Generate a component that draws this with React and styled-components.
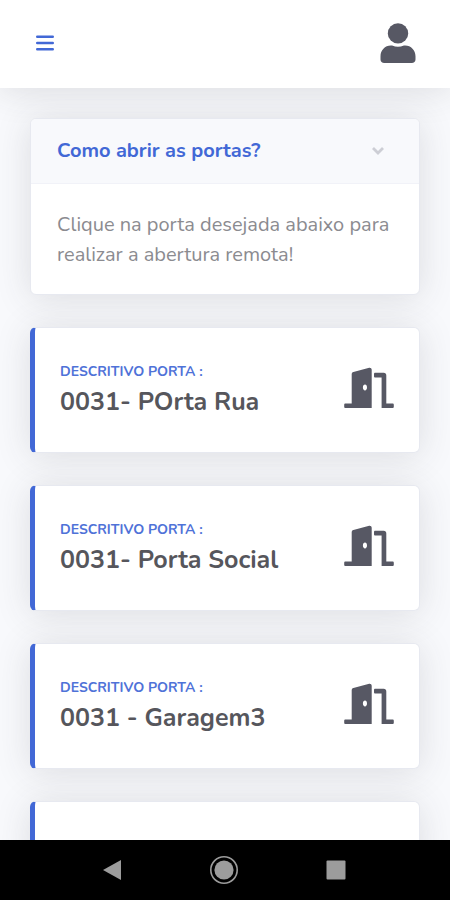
import React from "react";
import styled, { createGlobalStyle } from "styled-components";

const GlobalStyle = createGlobalStyle`
  * { box-sizing: border-box; }
  body {
    margin: 0;
    background: #f8f9fc;
    font-family: Nunito, Lato, sans-serif;
    color: #858796;
  }
  button { font: inherit; color: inherit; border: 0; background: none; padding: 0; cursor: pointer; }
  svg { display: block; }
`;

const shadow = "0 3px 35px rgba(58, 59, 69, 0.15)";

const Screen = styled.div`
  height: 100vh;
  display: flex;
  flex-direction: column;
`;

const TopBar = styled.header`
  flex: none;
  height: 88px;
  padding: 0 34px 2px 36px;
  display: flex;
  align-items: center;
  justify-content: space-between;
  background: #fff;
  box-shadow: ${shadow};
`;

const MenuButton = styled.button`
  color: #4268d6;
`;

const UserButton = styled.button`
  color: #575864;
`;

const Content = styled.main`
  flex: 1;
  min-height: 0;
  overflow-y: auto;
  scrollbar-width: none;
  padding: 30px;
  display: flex;
  flex-direction: column;
  gap: 32px;
`;

const Card = styled.section`
  flex: none;
  background: #fff;
  border: 1px solid #e7e9f0;
  border-radius: 6px;
  box-shadow: ${shadow};
`;

const CardHeader = styled.button`
  width: 100%;
  height: 65px;
  padding: 0 34px 0 26px;
  display: flex;
  align-items: center;
  justify-content: space-between;
  background: #f8f9fc;
  border-bottom: 1px solid #f1f2f8;
  border-radius: 5px 5px 0 0;
  color: #4268d6;
`;

const CardTitle = styled.span`
  font-size: 20px;
  line-height: 24px;
  font-weight: 700;
`;

const CardText = styled.p`
  margin: 0;
  padding: 26px 26px 24px;
  font-size: 20px;
  line-height: 30px;
  color: #8b8b90;
`;

const DoorCard = styled.button`
  flex: none;
  height: 126px;
  padding: 33px 25px 0;
  display: flex;
  align-items: flex-start;
  justify-content: space-between;
  text-align: left;
  background: #fff;
  border: 1px solid #e7e9f0;
  border-left: 5px solid #4268d6;
  border-radius: 6px;
  box-shadow: ${shadow};
`;

const DoorInfo = styled.span`
  display: flex;
  flex-direction: column;
  gap: 2px;
`;

const DoorLabel = styled.span`
  font-size: 14px;
  line-height: 21px;
  font-weight: 700;
  text-transform: uppercase;
  color: #4f72d8;
`;

const DoorName = styled.span`
  font-size: 25px;
  line-height: 36px;
  font-weight: 700;
  color: #56565c;
`;

const DoorDrawing = styled.svg`
  margin-top: 6px;
  color: #575864;
`;

const SystemBar = styled.nav`
  flex: none;
  height: 60px;
  padding: 0 104px 0 102px;
  display: flex;
  align-items: center;
  justify-content: space-between;
  background: #000;
  color: #9c9c9c;
`;

const MenuIcon = () => (
  <svg width="18" height="18" viewBox="0 0 18 18" aria-hidden="true">
    <path d="M1.2 2.8h15.6M1.2 9h15.6M1.2 15.2h15.6" stroke="currentColor" strokeWidth="2.4" strokeLinecap="round" />
  </svg>
);

const UserIcon = () => (
  <svg width="36" height="42" viewBox="0 0 36 42" fill="currentColor" aria-hidden="true">
    <circle cx="18" cy="11.4" r="10.2" />
    <path d="M10.8 23.5h1.3a14 14 0 0 0 11.8 0h1.3c5.8 0 10.3 4.8 10.3 10.7v3.3c0 2.1-1.6 3.6-3.7 3.6H4.2C2.1 41.1.5 39.6.5 37.5v-3.3c0-5.9 4.5-10.7 10.3-10.7z" />
  </svg>
);

const ChevronIcon = () => (
  <svg width="14" height="10" viewBox="0 0 14 10" aria-hidden="true">
    <path d="M2 2l5 5 5-5" fill="none" stroke="#cdced5" strokeWidth="2.8" />
  </svg>
);

const DoorIcon = () => (
  <DoorDrawing width="50" height="42" viewBox="0 0 50 42" fill="currentColor" aria-hidden="true">
    <path fillRule="evenodd" d="M25.2.8 9.4 4.9C8.3 5.2 7.7 6 7.7 7v29.4H1.5c-.8 0-1.3.5-1.3 1.3v2c0 .8.5 1.3 1.3 1.3h26.2V2.7c0-1.3-1.2-2.2-2.5-1.9zM21 17.6c1.2 0 2 1.2 2 2.9s-.8 2.9-2 2.9-2.1-1.2-2.1-2.9.9-2.9 2.1-2.9z" />
    <path d="M31.3 5.8h8.4c1.6 0 2.6 1.1 2.6 2.6v28h6.2c.8 0 1.3.5 1.3 1.3v2c0 .8-.5 1.3-1.3 1.3H37.6V10.6h-6.3c-.8 0-1.3-.5-1.3-1.3V7.1c0-.8.5-1.3 1.3-1.3z" />
  </DoorDrawing>
);

const doors = ["0031- POrta Rua", "0031- Porta Social", "0031 - Garagem3", null];

export default function App() {
  return (
    <Screen>
      <GlobalStyle />
      <TopBar>
        <MenuButton aria-label="Menu"><MenuIcon /></MenuButton>
        <UserButton aria-label="Perfil"><UserIcon /></UserButton>
      </TopBar>
      <Content>
        <Card>
          <CardHeader aria-expanded="true" aria-controls="ajuda">
            <CardTitle>Como abrir as portas?</CardTitle>
            <ChevronIcon />
          </CardHeader>
          <CardText id="ajuda">Clique na porta desejada abaixo para realizar a abertura remota!</CardText>
        </Card>
        {doors.map((name, i) => (
          <DoorCard key={i} aria-label={name || "Porta"}>
            {name && (
              <>
                <DoorInfo>
                  <DoorLabel>Descritivo porta :</DoorLabel>
                  <DoorName>{name}</DoorName>
                </DoorInfo>
                <DoorIcon />
              </>
            )}
          </DoorCard>
        ))}
      </Content>
      <SystemBar>
        <button aria-label="Voltar">
          <svg width="20" height="22" viewBox="0 0 20 22"><path d="M1 11 19 1v20z" fill="currentColor" /></svg>
        </button>
        <button aria-label="Início">
          <svg width="30" height="30" viewBox="0 0 30 30">
            <circle cx="15" cy="15" r="13.2" fill="none" stroke="currentColor" strokeWidth="1.6" />
            <circle cx="15" cy="15" r="9.6" fill="currentColor" />
          </svg>
        </button>
        <button aria-label="Recentes">
          <svg width="20" height="20" viewBox="0 0 20 20"><rect x="0.5" y="0.5" width="19" height="19" rx="1" fill="currentColor" /></svg>
        </button>
      </SystemBar>
    </Screen>
  );
}
